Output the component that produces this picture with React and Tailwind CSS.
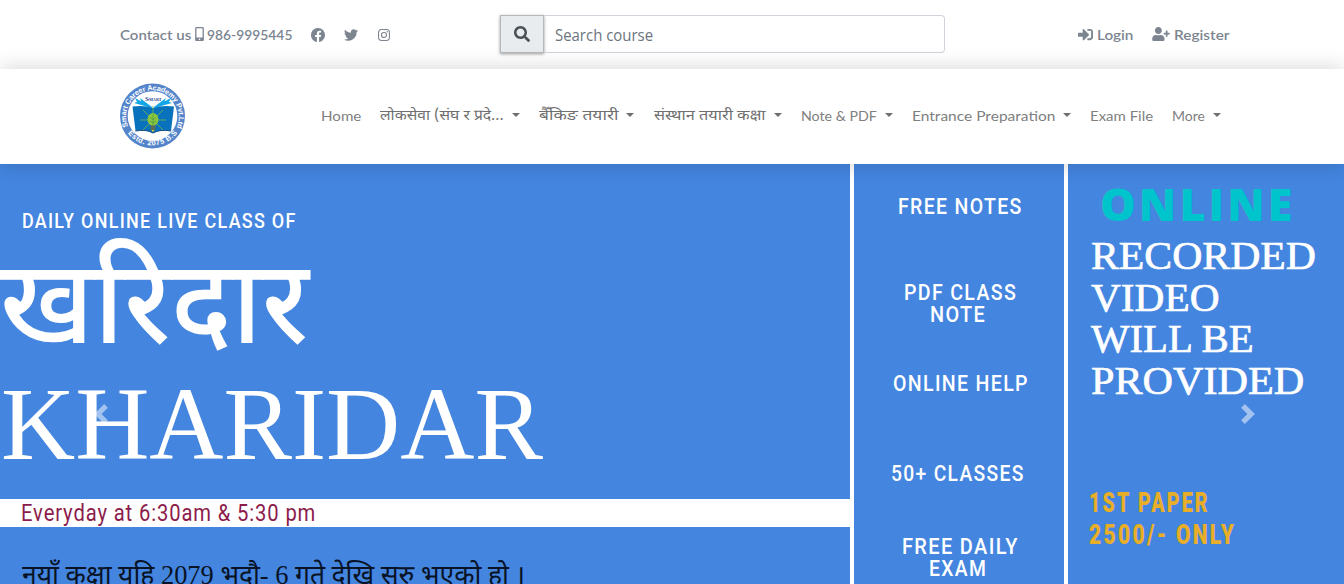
import { useLayoutEffect, useRef } from "react";
import { FaMobileAlt, FaSearch, FaSignInAlt, FaTwitter, FaUserPlus } from "react-icons/fa";
import { BsFacebook, BsInstagram } from "react-icons/bs";

/* One line of text stretched horizontally to the width of its box. */
function Fit({ className = "", children }) {
  const box = useRef(null);
  const text = useRef(null);
  useLayoutEffect(() => {
    const fit = () => {
      const w = text.current.offsetWidth;
      if (w) text.current.style.transform = `scaleX(${box.current.clientWidth / w})`;
    };
    fit();
    document.fonts?.ready.then(fit);
  }, []);
  return (
    <div ref={box} className={`shrink-0 whitespace-nowrap ${className}`}>
      <span ref={text} className="inline-block origin-left">{children}</span>
    </div>
  );
}

function Logo() {
  return (
    <svg viewBox="0 0 66 66" className="h-[66px] w-[66px]">
      <circle cx="32.500" cy="33" r="32.5" fill="#5485cb" />
      <circle cx="32.500" cy="33" r="24.8" fill="#fff" />
      <defs>
        <path id="arcTop" d="M8 43.5 A26.4 26.4 0 1 1 57 43.5" />
        <path id="arcBottom" d="M5.7 47 A31 31 0 0 0 59.3 47" />
      </defs>
      <g fill="#fff" fontFamily="Liberation Sans" fontWeight="700" fontSize="7.3">
        <text><textPath href="#arcTop" textLength="104">Smart Career Academy Pvt.Ltd</textPath></text>
        <text><textPath href="#arcBottom" startOffset="4" textLength="57">Estd. 2075 B.S</textPath></text>
      </g>
      <text x="25" y="18" fill="#28408c" fontFamily="Liberation Serif" fontWeight="700" fontSize="7">S<tspan fontSize="4.2">MART</tspan></text>
      <path d="M32 24L15 15l2 4-3 1 18 5zM34 24l17-9-2 4 3 1-18 5zM32 24L20 15l2 5zM34 24l12-9-2 5z" fill="#12a5e8" />
      <path d="M12.5 23.5Q25 22 33 25Q42 22 54 23.5L51 48Q40 46 33 50Q26 46 15.500 48z" fill="#0872bd" />
      <path d="M15.5 48Q26 46 33 50Q40 46 51 48" fill="none" stroke="#164a85" strokeWidth="1" />
      <path d="M33 23v8M20 37h26M23 27l20 20M43 27L23 47" stroke="#75b84a" strokeWidth=".8" />
      <ellipse cx="33" cy="36.500" rx="5.500" ry="6.500" fill="#8cc63f" />
      <path d="M33 31v11M30 34l3 3 3-3M30 38l3 2 3-2" stroke="#4c9a45" strokeWidth=".7" fill="none" />
      <path d="M30.500 42.500h5v4l-2.500 2-2.500-2z" fill="#5b6b55" />
      <path d="M31.500 47h3l-1.500 2z" fill="#e4d43a" />
    </svg>
  );
}

function Caret() {
  return <span className="mb-[2px] h-0 w-0 shrink-0 border-x-4 border-t-4 border-x-transparent border-t-[#6f6f6f]" />;
}

function Chevron({ flip }) {
  return (
    <svg viewBox="0 0 8 8" className="h-5 w-5 opacity-50" fill="#fff">
      <path d={flip ? "M2.75 0l-1.5 1.5 2.5 2.5-2.5 2.5 1.5 1.5 4-4-4-4z" : "M5.25 0l-4 4 4 4 1.5-1.500-2.500-2.500 2.500-2.500-1.500-1.500z"} />
    </svg>
  );
}

const deva = "font-['Noto_Sans_Devanagari','Noto_Sans',sans-serif]";

export default function App() {
  return (
    <div className="flex h-[584px] w-[1344px] flex-col overflow-hidden bg-white font-['Lato',sans-serif]">
      <header className="flex h-[69px] shrink-0 items-center pb-px pl-[120px] text-[14px] font-semibold text-[#7d8591]">
        <div className="flex w-[380px] items-center">
          <Fit className="w-[71px]">Contact us</Fit>
          <FaMobileAlt className="ml-px h-[14px] w-[15px]" />
          <Fit className="w-[85px]">986-9995445</Fit>
          <BsFacebook className="ml-[19px] mt-px h-[14px] w-[14px]" />
          <FaTwitter className="ml-[19px] mt-px h-[14px] w-[14px]" />
          <BsInstagram className="ml-[20px] mt-px h-[12px] w-[12px]" />
        </div>
        <div className="flex h-[38px] w-[445px] shrink-0">
          <button className="flex w-11 items-center justify-center border border-[#b5b9bd] bg-[#e9ecef] text-[#495057] shadow-[0_1px_3px_rgba(0,0,0,0.4)]">
            <FaSearch className="h-4 w-4" />
          </button>
          <div className="flex flex-1 items-center rounded-r border border-l-0 border-[#ced4da] pl-[11px] pt-[2px] font-['Open_Sans',sans-serif] text-base font-normal text-[#6c757d]">
            <Fit className="w-[98px]">Search course</Fit>
          </div>
        </div>
        <div className="ml-[133px] flex items-center">
          <FaSignInAlt className="h-[15px] w-[15px]" />
          <Fit className="ml-1 w-[36px]">Login</Fit>
          <FaUserPlus className="ml-[19px] h-[14px] w-[18px]" />
          <Fit className="ml-1 w-[55px]">Register</Fit>
        </div>
      </header>

      <nav className="relative z-10 flex h-[95px] shrink-0 items-center bg-white pb-px pl-[120px] text-[14px] text-[#808080] shadow-[0_0_20px_rgba(0,0,0,0.18)]">
        <Logo />
        <Fit className="mb-px ml-[135px] w-[40px]">Home</Fit>
        <Fit className={`ml-[19px] w-[124px] pt-[3px] text-[15px] text-[#6f6f6f] ${deva}`}>लोकसेवा (संघ र प्रदे...</Fit>
        <div className="ml-[8px] flex"><Caret /></div>
        <Fit className={`ml-[19px] w-[80px] pt-[3px] text-[15px] text-[#6f6f6f] ${deva}`}>बैँकिङ तयारी</Fit>
        <div className="ml-[7px] flex"><Caret /></div>
        <Fit className={`ml-[20px] w-[112px] pt-[3px] text-[15px] text-[#6f6f6f] ${deva}`}>संस्थान तयारी कक्षा</Fit>
        <div className="ml-[8px] flex"><Caret /></div>
        <Fit className="mb-px ml-[19px] w-[76px]">Note &amp; PDF</Fit>
        <div className="ml-[8px] flex"><Caret /></div>
        <Fit className="mb-px ml-[19px] w-[143px]">Entrance Preparation</Fit>
        <div className="ml-[8px] flex"><Caret /></div>
        <Fit className="mb-px ml-[19px] w-[63px]">Exam File</Fit>
        <Fit className="mb-px ml-[19px] w-[33px]">More</Fit>
        <div className="ml-[8px] flex"><Caret /></div>
      </nav>

      <main className="relative flex h-[420px] shrink-0 overflow-hidden bg-[#4485df] text-white">
        <section className="flex h-full w-[850px] shrink-0 flex-col overflow-hidden">
          <Fit className="ml-[22px] mt-[42px] h-[26px] w-[275px] font-['Roboto'] text-[21px] font-medium leading-[30px] tracking-[1.5px]">DAILY ONLINE LIVE CLASS OF</Fit>
          <Fit className={`h-[142px] w-[309px] text-[117px] font-medium leading-[165px] ${deva}`}>खरिदार</Fit>
          <Fit className="ml-px h-[125px] w-[542px] font-['Liberation_Serif'] text-[104px] leading-[99px]">KHARIDAR</Fit>
          <div className="h-7 shrink-0 bg-white text-[#8c1c4b]">
            <Fit className="ml-[21px] w-[295px] font-['Roboto'] text-[23px] leading-[30px] tracking-[1px]">Everyday at 6:30am &amp; 5:30 pm</Fit>
          </div>
          <Fit className="ml-[22px] mt-[28px] h-[30px] w-[503px] font-['Liberation_Serif','Noto_Sans_Devanagari','Noto_Sans'] text-[27px] leading-[40px] text-[#081326]">नयाँ कक्षा यहि 2079 भदौ- 6 गते देखि सुरु भएको हो ।</Fit>
        </section>

        <section className="flex h-full w-[218px] shrink-0 flex-col items-center border-x-4 border-white pl-[3px] font-['Roboto'] text-[22px] font-medium leading-[22px] tracking-[1.5px]">
          <Fit className="mt-[32px] w-[125px]">FREE NOTES</Fit>
          <Fit className="mt-[64px] w-[113px]">PDF CLASS</Fit>
          <Fit className="mr-[6px] w-[56px] leading-[21px]">NOTE</Fit>
          <Fit className="mt-[48px] w-[136px]">ONLINE HELP</Fit>
          <Fit className="mr-[6px] mt-[68px] w-[134px]">50+ CLASSES</Fit>
          <Fit className="mt-[51px] w-[117px]">FREE DAILY</Fit>
          <Fit className="mr-[6px] w-[58px] leading-[21px]">EXAM</Fit>
        </section>

        <section className="flex h-full flex-1 flex-col pl-[22px]">
          <Fit className="ml-[10px] mt-[13px] h-[57px] w-[195px] font-['Open_Sans'] text-[45px] font-extrabold leading-[53px] tracking-[3px] text-[#00c4cc]">ONLINE</Fit>
          <div className="flex h-[168px] flex-col font-['Liberation_Serif'] text-[41px] leading-[42px] [-webkit-text-stroke:0.7px_white]">
            <Fit className="ml-px w-[225px]">RECORDED</Fit>
            <Fit className="ml-px w-[129px]">VIDEO</Fit>
            <Fit className="ml-px w-[163px] leading-[41px]">WILL BE</Fit>
            <Fit className="ml-px w-[213px]">PROVIDED</Fit>
          </div>
          <div className="mt-[85px] flex flex-col font-['Roboto'] text-[28px] font-black leading-[32px] tracking-[3px] text-[#e9ae27]">
            <Fit className="-ml-px w-[121px]">1ST PAPER</Fit>
            <Fit className="-ml-px w-[147px]">2500/- ONLY</Fit>
          </div>
        </section>

        <button className="absolute left-[91px] top-[240px]"><Chevron /></button>
        <button className="absolute left-[1238px] top-[240px]"><Chevron flip /></button>
      </main>
    </div>
  );
}
